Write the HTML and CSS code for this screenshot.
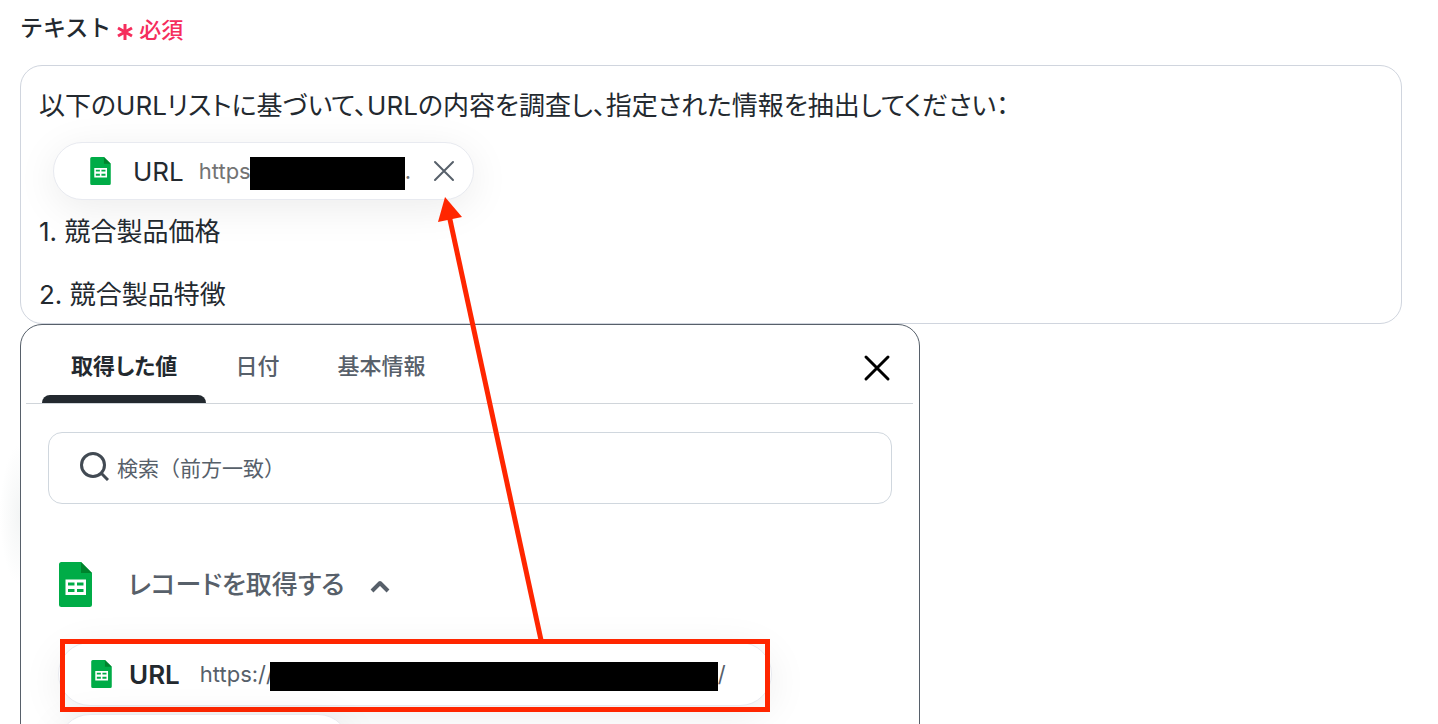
FILE: index.html
```html
<!DOCTYPE html>
<html lang="ja">
<head>
<meta charset="utf-8">
<meta name="viewport" content="width=device-width, initial-scale=1">
<title>テキスト</title>
<link rel="stylesheet" href="styles.css">
</head>
<body>
<svg class="defs" aria-hidden="true">
  <symbol id="sheet" viewBox="0 0 33 45">
    <path fill="#00ac47" d="M2.500 0H22L33 11V42.500A2.500 2.500 0 0 1 30.500 45H2.500A2.500 2.500 0 0 1 0 42.500V2.500A2.500 2.500 0 0 1 2.500 0Z"/>
    <path fill="#00832d" d="M22 0L33 11H22Z"/>
    <path fill="#fff" fill-rule="evenodd" d="M6.500 17.500H27V33H6.500ZM9 20.500V23.500H15.500V20.500ZM18 20.500V23.500H24.500V20.500ZM9 27V30H15.500V27ZM18 27V30H24.500V27Z"/>
  </symbol>
</svg>
<main class="page">
  <div class="label-row">
    <span class="label" id="field-label">テキスト</span>
    <span class="required">
      <svg class="asterisk" viewBox="0 0 16 18" aria-hidden="true"><path d="M8 1V17M1 5L15 13M15 5L1 13"/></svg>
      必須
    </span>
  </div>

  <div class="editor" role="textbox" aria-multiline="true" aria-labelledby="field-label">
    <p class="line">以下のURLリストに基づいて、URLの内容を調査し、指定された情報を抽出してください：</p>
    <div class="token">
      <svg class="sheet-sm" aria-hidden="true"><use href="#sheet"/></svg>
      <span class="token-name">URL</span>
      <span class="token-value"><span class="token-scheme">https</span><span class="redacted"></span>.</span>
      <button class="icon-button token-remove" type="button" aria-label="削除">
        <svg viewBox="0 0 22 22" aria-hidden="true"><path d="M2 2L20 20M20 2L2 20"/></svg>
      </button>
    </div>
    <p class="line line-first">1. 競合製品価格</p>
    <p class="line line-next">2. 競合製品特徴</p>
  </div>

  <section class="panel">
    <div class="tabs">
      <div class="tab-list" role="tablist">
        <button class="tab tab-active" type="button" role="tab" aria-selected="true">取得した値</button>
        <button class="tab" type="button" role="tab" aria-selected="false">日付</button>
        <button class="tab" type="button" role="tab" aria-selected="false">基本情報</button>
      </div>
      <button class="icon-button panel-close" type="button" aria-label="閉じる">
        <svg viewBox="0 0 28 28" aria-hidden="true"><path d="M3 3L25 25M25 3L3 25"/></svg>
      </button>
    </div>

    <label class="search">
      <svg class="search-icon" viewBox="0 0 30 30" aria-hidden="true"><circle cx="14" cy="14" r="11.500"/><path d="M22 22L29 29"/></svg>
      <input class="search-input" type="text" placeholder="検索（前方一致）" aria-label="検索（前方一致）">
    </label>

    <button class="group" type="button" aria-expanded="true">
      <svg class="sheet-lg" aria-hidden="true"><use href="#sheet"/></svg>
      <span class="group-name">レコードを取得する</span>
      <svg class="chevron" viewBox="0 0 20 14" aria-hidden="true"><path d="M2 11L10 3L18 11"/></svg>
    </button>

    <div class="values">
      <button class="value" type="button">
        <svg class="sheet-sm" aria-hidden="true"><use href="#sheet"/></svg>
        <span class="value-name">URL</span>
        <span class="value-text"><span class="value-scheme">https://</span><span class="redacted"></span>/</span>
        <span class="highlight"></span>
      </button>
      <button class="value value-next" type="button" aria-label="値"></button>
    </div>
  </section>

  <svg class="arrow" viewBox="0 0 120 450" aria-hidden="true">
    <path class="arrow-line" d="M111 444L19 19"/>
    <path class="arrow-head" d="M15 1L32 21L8 26Z"/>
  </svg>
</main>
</body>
</html>
```
FILE: styles.css
```css
* {
  box-sizing: border-box;
}

body {
  margin: 0;
  background: #fff;
  color: #23292f;
  font-family: Inter, "Noto Sans CJK JP", sans-serif;
}

button,
input {
  margin: 0;
  padding: 0;
  border: 0;
  background: none;
  color: inherit;
  font: inherit;
}

.defs {
  position: absolute;
  width: 0;
  height: 0;
}

.page {
  position: relative;
  height: 100vh;
  overflow: hidden;
  padding: 8px 36px 0 20px;
  background: radial-gradient(ellipse 20px 70px at 20px 515px, #f3f5f5, #fff);
}

.label-row {
  display: flex;
  align-items: center;
  gap: 6px;
  height: 57px;
  padding-bottom: 18px;
}

.label {
  font-size: 23px;
  font-weight: 500;
  line-height: 40px;
}

.required {
  display: flex;
  align-items: center;
  gap: 6px;
  padding-top: 4px;
  color: #f52d5c;
  font-size: 22px;
  font-weight: 500;
  line-height: 36px;
}

.asterisk {
  width: 16px;
  height: 18px;
  margin-top: 4px;
  fill: none;
  stroke: currentColor;
  stroke-width: 3;
}

.editor {
  padding: 20px 18px 8px;
  border: 1px solid #d0d5de;
  border-radius: 22px;
}

.line {
  margin: 0;
  font-size: 26px;
  line-height: 40px;
  font-feature-settings: "palt";
}

.line-first {
  margin-top: 12px;
}

.line-next {
  margin-top: 23px;
}

.token {
  display: flex;
  align-items: center;
  width: 421px;
  height: 58px;
  margin: 16px 0 0 14px;
  padding: 0 18px 0 36px;
  border: 1px solid #e8eaf0;
  border-radius: 29px;
  background: #fff;
  box-shadow: 0 8px 40px rgba(0, 0, 0, 0.08);
}

.sheet-sm {
  flex: none;
  width: 21px;
  height: 28px;
}

.token-name {
  margin: 0 15px 0 22px;
  font-size: 26px;
}

.token-value {
  display: flex;
  align-items: center;
  flex: 1;
  height: 34px;
  color: #737373;
  font-size: 22px;
}

.token-scheme {
  width: 51px;
}

.redacted {
  position: relative;
  flex: none;
  background: #000;
}

.token .redacted {
  width: 155px;
  height: 33px;
  margin-top: 4px;
}

.icon-button {
  display: flex;
  flex: none;
  cursor: pointer;
}

.icon-button svg {
  width: 100%;
  height: 100%;
  fill: none;
  stroke: currentColor;
  stroke-linecap: round;
}

.token-remove {
  width: 22px;
  height: 22px;
  color: #57606a;
  stroke-width: 2;
}

.panel {
  max-width: 900px;
  height: 480px;
  padding: 0 6px 0 5px;
  border: 1px solid #57606a;
  border-radius: 22px;
  background: #fff;
}

.tabs {
  display: flex;
  align-items: center;
  justify-content: space-between;
  height: 79px;
  padding: 0 22px 0 16px;
  border-bottom: 1px solid #d0d5da;
}

.tab-list {
  display: flex;
  height: 78px;
}

.tab {
  position: relative;
  height: 78px;
  padding: 0 29px;
  color: #57606a;
  font-size: 22px;
  font-weight: 500;
  white-space: nowrap;
  font-feature-settings: "palt";
}

.tab-active {
  color: #23292f;
  font-weight: 700;
}

.tab-active::after {
  content: "";
  position: absolute;
  right: 0;
  bottom: 0;
  left: 0;
  height: 8px;
  border-radius: 8px 8px 0 0;
  background: #23292f;
}

.panel-close {
  width: 28px;
  height: 28px;
  margin-top: 8px;
  color: #000;
  stroke-width: 3;
}

.search {
  display: flex;
  align-items: center;
  gap: 8px;
  height: 72px;
  margin: 28px 21px 0 22px;
  padding: 0 30px;
  border: 1px solid #d0d7de;
  border-radius: 14px;
}

.search-icon {
  flex: none;
  width: 30px;
  height: 30px;
  margin-bottom: 4px;
  fill: none;
  stroke: #424a53;
  stroke-width: 3;
}

.search-input {
  flex: 1;
  min-width: 0;
  height: 40px;
  outline: 0;
  font-size: 21px;
}

.search-input::placeholder {
  color: #57606a;
  opacity: 1;
}

.group {
  display: flex;
  align-items: center;
  margin: 58px 0 0 33px;
  color: #57606a;
}

.sheet-lg {
  width: 33px;
  height: 45px;
}

.group-name {
  margin: 0 25px 0 36px;
  font-size: 26px;
  font-weight: 500;
  line-height: 40px;
  font-feature-settings: "palt";
}

.chevron {
  width: 20px;
  height: 14px;
  margin-top: 4px;
  fill: none;
  stroke: currentColor;
  stroke-width: 4;
  stroke-linejoin: round;
}

.values {
  display: flex;
  flex-direction: column;
  align-items: flex-start;
  gap: 8px;
  margin: 35px 0 0 32px;
}

.value {
  position: relative;
  display: flex;
  align-items: center;
  width: 714px;
  height: 64px;
  padding: 0 32px;
  border: 1px solid #e8eaf0;
  border-radius: 32px;
  background: #fff;
  box-shadow: 0 8px 40px rgba(0, 0, 0, 0.08);
}

.value-next {
  width: 292px;
}

.value-name {
  margin: 0 20px 0 17px;
  font-size: 26px;
  font-weight: 600;
}

.value-text {
  display: flex;
  align-items: center;
  color: #57606a;
  font-size: 22px;
}

.value-scheme {
  width: 70px;
  text-align: left;
}

.value .redacted {
  width: 448px;
  height: 29px;
  margin-top: 4px;
}

.highlight {
  position: absolute;
  inset: -4px 1px -7px;
  border: 5px solid #ff2600;
}

.arrow {
  position: absolute;
  top: 196px;
  left: 430px;
  width: 120px;
  height: 450px;
  pointer-events: none;
}

.arrow-line {
  fill: none;
  stroke: #ff2600;
  stroke-width: 5;
}

.arrow-head {
  fill: #ff2600;
}
```
